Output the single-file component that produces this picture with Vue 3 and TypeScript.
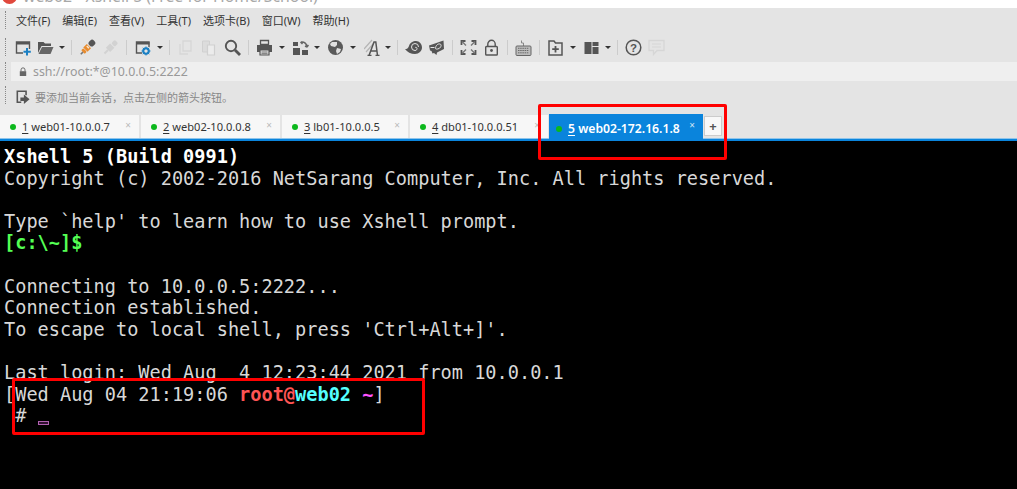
<script setup lang="ts">
const menus = ['文件(F)', '编辑(E)', '查看(V)', '工具(T)', '选项卡(B)', '窗口(W)', '帮助(H)']
const tabs = [
  { n: '1', label: ' web01-10.0.0.7', w: 139 },
  { n: '2', label: ' web02-10.0.0.8', w: 139 },
  { n: '3', label: ' lb01-10.0.0.5', w: 126 },
  { n: '4', label: ' db01-10.0.0.51', w: 138 },
]
</script>

<template>
  <div class="app">
    <div class="title"><span class="logo"></span><span class="title-text">web02 - Xshell 5 (Free for Home/School)</span></div>
    <div class="menubar">
      <i class="grip"></i>
      <span v-for="m in menus" :key="m" class="menu">{{ m }}</span>
    </div>
    <div class="toolbar">
      <i class="grip"></i>
      <svg class="ic" viewBox="0 0 17 17"><path d="M9 14H2.500V3h13v7" fill="none" stroke="#555" stroke-width="1.400"/><path d="M2 3h14v2.500H2z" fill="#555"/><path d="M13 9v7.500M9.500 12.800h7.300" stroke="#1b80c4" stroke-width="2"/></svg>
      <svg class="ic" viewBox="0 0 17 17"><path d="M1 3h5.500l1.500 1.500h6V7H4.500L1 14z" fill="#555"/><path d="M1.500 15l3.500-7h11.500l-3 7z" fill="#666"/></svg>
      <i class="caret"></i><i class="sep"></i>
      <svg class="ic" viewBox="0 0 17 17"><g transform="rotate(45 8.500 8.500)"><rect x="5.500" y="-1" width="6" height="6.500" rx="2.500" fill="#555"/><rect x="5.500" y="6.500" width="6" height="5" fill="#e88b2e"/><path d="M7 8h3" stroke="#f8e8d0" stroke-width="1.500"/><rect x="6" y="12" width="5" height="3" rx="1" fill="#e88b2e"/><path d="M8.500 15v3" stroke="#777" stroke-width="1.500"/></g></svg>
      <svg class="ic" viewBox="0 0 17 17"><g transform="rotate(45 8.500 8.500)" fill="#d2d2d2"><rect x="6" y="0" width="5" height="5" rx="1.500"/><rect x="5.500" y="6" width="6" height="6"/><rect x="7.500" y="12" width="2" height="5"/></g></svg>
      <i class="sep"></i>
      <svg class="ic" viewBox="0 0 17 17"><path d="M8 14H2.500V3h12.500v5" fill="none" stroke="#555" stroke-width="1.400"/><path d="M2 3h13.500v2.500H2z" fill="#555"/><circle cx="12" cy="12" r="2.800" fill="none" stroke="#1b80c4" stroke-width="2"/><path d="M12 7.500v9M7.500 12h9M8.800 8.800l6.400 6.400M15.200 8.800l-6.400 6.400" stroke="#1b80c4"/><circle cx="12" cy="12" r="1.500" fill="#e4e4e4"/></svg>
      <i class="caret"></i><i class="sep"></i>
      <svg class="ic" viewBox="0 0 17 17"><path d="M6 2h8v10H6z" fill="none" stroke="#d6d6d6" stroke-width="1.300"/><path d="M3 5v10h8" fill="none" stroke="#d6d6d6" stroke-width="1.300"/></svg>
      <svg class="ic" viewBox="0 0 17 17"><path d="M2.500 2h7v11h-7z" fill="#dcdcdc" stroke="#d0d0d0"/><path d="M7.500 6h7v10h-7z" fill="#ececec" stroke="#d0d0d0" stroke-width="1.200"/></svg>
      <svg class="ic find" viewBox="0 0 17 17"><circle cx="7" cy="7" r="5.200" fill="none" stroke="#555" stroke-width="1.900"/><path d="M11 11l5 5" stroke="#555" stroke-width="2.800"/></svg>
      <i class="sep"></i>
      <svg class="ic" viewBox="0 0 17 17"><path d="M4.500 1.500h8v4h-8z" fill="none" stroke="#555" stroke-width="1.300"/><path d="M1 6h15v7H1z" fill="#555"/><path d="M4 11h9v5H4z" fill="#e4e4e4" stroke="#555" stroke-width="1.200"/><path d="M5.500 13h6M5.500 14.700h6" stroke="#555" stroke-width=".8"/></svg>
      <i class="caret"></i>
      <svg class="ic" viewBox="0 0 17 17"><path d="M1 9h7v7H1zM10 11h6v5h-6zM1 3h5v4H1z" fill="#555"/><path d="M9 3a5 5 0 0 1 6 5M15 8l-2-1M15 8l1.500-2M8.500 3l2 2" fill="none" stroke="#666" stroke-width="1.500"/></svg>
      <i class="caret"></i>
      <svg class="ic" viewBox="0 0 17 17"><circle cx="8.500" cy="8.500" r="7.500" fill="#5a5a5a"/><path d="M5 3l5 0 0 3-2 2-4-1-1-2zM10 9l4 1-1 3-3 2-1-3z" fill="#e0e0e0"/></svg>
      <i class="caret"></i>
      <svg class="ic font" viewBox="0 0 17 17"><path d="M0 10L8 1M2 13l8-9" stroke="#b5b5b5" stroke-width="1.200"/><path d="M5 16.500L10 3h1.800l1.700 13.500M7 12h6.500M3.500 16.500h4M11.500 16.500h4" fill="none" stroke="#555" stroke-width="1.500"/></svg>
      <i class="caret"></i><i class="sep"></i>
      <svg class="ic" viewBox="0 0 17 17"><path d="M0 10c2 0 3-.5 4-3C5 3.500 8 2 11 2c3.500 0 6 3 6 6.500s-3 6.500-7 6.500c-4 0-8-2-10-5z" fill="#555"/><path d="M13.500 8a3.500 3.500 0 1 0-3.500 3.500c1.500 0 2-1 2-2s-1-1.500-1.800-1" fill="none" stroke="#e4e4e4" stroke-width="1"/></svg>
      <svg class="ic" viewBox="0 0 17 17"><path d="M1 6.500l3-1 11.500-4L16 10l-7 3.500L8.500 16l-2.500-2-1.500.5-1-2.500-1.500-.5z" fill="#555"/><path d="M7.500 9.500c0-3 2.500-5 4.500-4.500s1 3.500-1 4.500-3.500.5-3.500 0zM2.500 8.500h4" fill="none" stroke="#e4e4e4"/></svg>
      <i class="sep"></i>
      <svg class="ic" viewBox="0 0 17 17"><path d="M1.500 6V2h4M11.500 2h4v4M15.500 11v4h-4M5.500 15h-4v-4" fill="none" stroke="#555" stroke-width="1.800"/><path d="M2 2.500l4 4M15 2.500l-4 4M15 14.500l-4-4M2 14.500l4-4" stroke="#777" stroke-width="1.400"/></svg>
      <svg class="ic" viewBox="0 0 17 17"><path d="M4.800 7.500V5a3.700 3.700 0 0 1 7.400 0v2.500" fill="none" stroke="#555" stroke-width="1.400"/><rect x="2.700" y="7.500" width="11.600" height="8.500" rx=".8" fill="none" stroke="#555" stroke-width="1.400"/><circle cx="8.500" cy="11.500" r="1.400" fill="#555"/></svg>
      <i class="sep"></i>
      <svg class="ic" viewBox="0 0 17 17"><path d="M6.500 1.500v2.500h2v3" fill="none" stroke="#888"/><rect x="1" y="7" width="15" height="9.500" rx="1" fill="#bcbcbc" stroke="#666"/><path d="M3 9.300h11M3 11.500h11M3 13.800h11" stroke="#6a6a6a" stroke-dasharray="1.500 .7"/></svg>
      <i class="sep"></i>
      <svg class="ic" viewBox="0 0 17 17"><path d="M2 2h5l1.500 2H15v12H2z" fill="none" stroke="#555" stroke-width="1.500"/><path d="M8.500 7v6.500M5.200 10.200h6.600" stroke="#555" stroke-width="1.800"/></svg>
      <i class="caret"></i>
      <svg class="ic" viewBox="0 0 17 17"><path d="M1.500 3h7v12h-7zM9.500 3h6v4h-6zM9.500 8h6v7h-6z" fill="#555"/></svg>
      <i class="caret"></i><i class="sep"></i>
      <svg class="ic" viewBox="0 0 17 17"><circle cx="8.500" cy="8.500" r="7.300" fill="none" stroke="#555" stroke-width="1.500"/><text x="8.500" y="13" text-anchor="middle" class="q">?</text></svg>
      <svg class="ic" viewBox="0 0 17 17"><path d="M1 1.500h15v10H9l-3.500 4v-4H1z" fill="none" stroke="#d6d6d6" stroke-width="1.300"/><path d="M4 5h9M4 8h9" stroke="#d6d6d6"/></svg>
    </div>
    <div class="addressbar">
      <i class="grip"></i>
      <div class="address">
        <svg class="lock" viewBox="0 0 10 12"><path d="M2.500 5V3.300a2.500 2.500 0 0 1 5 0V5" fill="none" stroke="#666" stroke-width="1.200"/><rect x="1" y="5" width="8" height="6" fill="#666"/></svg>
        <span>ssh://root:*@10.0.0.5:2222</span>
      </div>
    </div>
    <div class="hintbar">
      <i class="grip"></i>
      <svg class="hint-ic" viewBox="0 0 16 16"><path d="M6 14H1.500V1.500h10V6" fill="none" stroke="#555" stroke-width="1.800"/><path d="M5 8.500h4V5l6.500 5.500L9 16v-3.500H5z" fill="#555"/></svg>
      <span>要添加当前会话，点击左侧的箭头按钮。</span>
    </div>
    <div class="tabs">
      <div v-for="t in tabs" :key="t.n" class="tab" :style="{ width: t.w + 'px' }">
        <i class="dot"></i><span><u>{{ t.n }}</u>{{ t.label }}</span><span class="x">×</span>
      </div>
      <div class="tab active">
        <i class="dot"></i><span><u>5</u> web02-172.16.1.8</span><span class="x">×</span>
      </div>
      <div class="plus">+</div>
    </div>
    <pre class="term"><b>Xshell 5 (Build 0991)</b>
Copyright (c) 2002-2016 NetSarang Computer, Inc. All rights reserved.

Type `help' to learn how to use Xshell prompt.
<b class="green">[c:\~]$</b>

Connecting to 10.0.0.5:2222...
Connection established.
To escape to local shell, press 'Ctrl+Alt+]'.

Last login: Wed Aug  4 12:23:44 2021 from 10.0.0.1
[Wed Aug 04 21:19:06 <b class="red">root@</b><b class="cyan">web02</b> <b class="pink">~</b>]
 # <span class="cursor"></span></pre>
    <div class="mark mark-tab"></div>
    <div class="mark mark-prompt"></div>
  </div>
</template>

<style>
html, body { margin: 0; background: #000; overflow: hidden; }
</style>

<style scoped>
.app { position: relative; width: 1017px; height: 489px; overflow: hidden; display: flex; flex-direction: column; background: #000; font-family: "Noto Sans", "Noto Sans CJK SC", sans-serif; }
.title { height: 8px; background: #fff; overflow: hidden; display: flex; gap: 6px; padding-left: 2px; }
.logo { width: 15px; height: 15px; border-radius: 50%; background: #e0483c; flex: none; margin-top: -11px; }
.title-text { font-size: 15.800px; line-height: 16px; color: #a8a8a8; margin-top: -12px; white-space: nowrap; }
.menubar { height: 24px; background: #e4e4e4; display: flex; align-items: center; padding-left: 5px; gap: 12px; font-size: 11px; color: #333; }
.menubar .grip { margin-right: -3px; }
.grip { width: 1px; height: 18px; border-left: 1px dotted #888; flex: none; }
.toolbar { height: 30px; background: #e4e4e4; display: flex; align-items: center; padding-left: 5px; }
.toolbar .grip { margin-right: 3.500px; }
.ic { width: 17px; height: 17px; flex: none; margin: 0 3px; }
.ic.find { margin: 0 3px 0 4.500px; }
.ic.font { margin-left: 4px; margin-right: 2px; }
.caret { width: 0; height: 0; border: 3px solid transparent; border-top: 3.500px solid #333; border-bottom: 0; flex: none; margin: 0 4px 0 2.500px; }
.sep { width: 1px; height: 15px; background: #ccc; flex: none; margin: 0 4px; }
.caret + .sep { margin-left: 2px; }
.q { font-size: 11.500px; font-weight: 700; fill: #555; font-family: "Liberation Sans", sans-serif; }
.addressbar { height: 19px; background: #e4e4e4; display: flex; padding-left: 5px; }
.address { flex: 1; margin-left: 4px; background: #efefef; display: flex; align-items: center; gap: 6px; padding-left: 8px; font-size: 12.400px; color: #999; }
.lock { width: 8px; height: 10px; }
.hintbar { height: 28px; box-sizing: border-box; padding: 4px 0 0 5px; background: #e4e4e4; display: flex; align-items: center; font-size: 11px; color: #888; }
.hintbar .grip { margin-top: -4px; }
.hint-ic { width: 14px; height: 14px; margin: 0 5px 0 9px; }
.tabs { height: 30px; box-sizing: border-box; background: #e4e4e4; border-bottom: 1px solid #8fc4ea; display: flex; align-items: flex-end; gap: 2px; font-size: 11.100px; color: #333; }
.tab { height: 23px; background: #f7f7f7; box-sizing: border-box; display: flex; align-items: center; padding-left: 10px; position: relative; white-space: nowrap; }
.tab u { text-underline-offset: 2px; }
.dot { width: 6px; height: 6px; border-radius: 50%; background: #0cb81c; margin-right: 6px; flex: none; }
.x { position: absolute; right: 8px; top: 3px; font-size: 10px; color: #bbb; }
.tab.active { width: 154px; height: 25px; margin: 0 0 -1px -1px; padding: 4px 0 0 7px; background: #0a84dc; color: #fff; font-weight: 600; font-size: 12.200px; }
.tab.active .x { color: #cfe4f5; top: 4px; font-weight: 400; }
.plus { width: 18px; height: 20px; margin: 0 0 2px -1px; border: 1px solid #ccc; background: #f8f8f8; color: #555; font-size: 13px; font-weight: 700; display: flex; align-items: center; justify-content: center; box-sizing: border-box; }
.term { margin: 0; flex: 1; background: #000; border-top: 2px solid #0a84dc; color: #d8d8d8; font-family: "DejaVu Sans Mono", monospace; font-size: 18.600px; line-height: 21.600px; padding: 5px 0 0 4px; }
.term b { color: #fff; }
.term .green { color: #54ff54; }
.term .red { color: #ff5454; }
.term .cyan { color: #54ffff; }
.term .pink { color: #ff54ff; }
.cursor { display: inline-block; width: 11px; height: 4px; border: 1px solid #b060b0; box-sizing: border-box; background: #30102f; vertical-align: -3px; }
.mark { position: absolute; border: 3px solid #f00; border-radius: 2px; box-sizing: border-box; }
.mark-tab { left: 538px; top: 104px; width: 189px; height: 56px; }
.mark-prompt { left: 12px; top: 378px; width: 413px; height: 57px; }
</style>
